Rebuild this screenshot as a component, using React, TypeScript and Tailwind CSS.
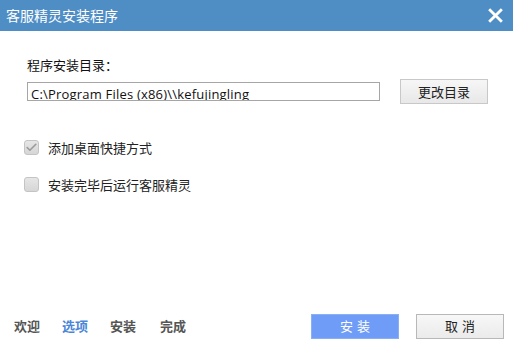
import { Check } from 'lucide-react'

const font = { fontFamily: '"Noto Sans CJK SC", "Liberation Sans", sans-serif' }

function CheckRow({ checked, label }: { checked?: boolean; label: string }) {
  return (
    <label className="flex items-center gap-[9px] text-[13px] text-[#222]">
      <span className="w-[15px] h-[15px] rounded-[3px] border border-[#c4c4c4] bg-gradient-to-b from-[#e6e6e6] to-[#d6d6d6] flex items-center justify-center">
        {checked && <Check className="w-[13px] h-[13px] text-[#9a9a9a]" strokeWidth={3} />}
      </span>
      {label}
    </label>
  )
}

export default function App() {
  return (
    <div className="w-[513px] h-[354px] bg-white flex flex-col" style={font}>
      {/* Title bar */}
      <div className="h-[31px] bg-[#4f8dc5] flex items-center justify-between pl-[6px] pr-[10px] text-white">
        <span className="text-[14px]">客服精灵安装程序</span>
        <svg width="15" height="15" viewBox="0 0 14 14">
          <path d="M2 2 L12 12 M12 2 L2 12" stroke="white" strokeWidth="2.6" strokeLinecap="square" />
        </svg>
      </div>

      {/* Options */}
      <div className="flex-1 flex flex-col pl-[27px] pt-[25px]">
        <div className="text-[13px] text-[#111] leading-[18px]">程序安装目录：</div>
        <div className="flex items-center mt-[5px]">
          <div className="w-[353px] h-[19px] border border-[#a6a6a6] overflow-hidden text-[13px] leading-[22px] pl-[3px] text-[#111] tracking-[0.2px]" style={{ fontFamily: '"Open Sans", "Noto Sans", sans-serif' }}>
            C:\Program Files (x86)\\kefujingling
          </div>
          <button className="ml-[20px] w-[88px] h-[25px] border border-[#c8c8c8] bg-gradient-to-b from-[#f6f6f6] to-[#e8e8e8] text-[13px] text-[#222]">
            更改目录
          </button>
        </div>

        <div className="flex flex-col gap-[17px] mt-[34px] -ml-[3px]">
          <CheckRow checked label="添加桌面快捷方式" />
          <CheckRow label="安装完毕后运行客服精灵" />
        </div>
      </div>

      {/* Footer */}
      <div className="h-[54px] flex items-center justify-between pl-[14px] pr-[9px] pb-[2px]">
        <div className="flex text-[13px] font-bold text-[#555]">
          <span className="w-[48px]">欢迎</span>
          <span className="w-[48px] text-[#4a86d8]">选项</span>
          <span className="w-[50px]">安装</span>
          <span>完成</span>
        </div>
        <div className="flex gap-[17px]">
          <button className="w-[88px] h-[25px] bg-[#6e9cf6] border border-[#8aaff4] text-white text-[13px] tracking-[4px] pl-[4px]">
            安装
          </button>
          <button className="w-[88px] h-[25px] border border-[#b8b8b8] bg-gradient-to-b from-[#f7f7f7] to-[#ebebeb] text-[#222] text-[13px] tracking-[4px] pl-[4px]">
            取消
          </button>
        </div>
      </div>
    </div>
  )
}
